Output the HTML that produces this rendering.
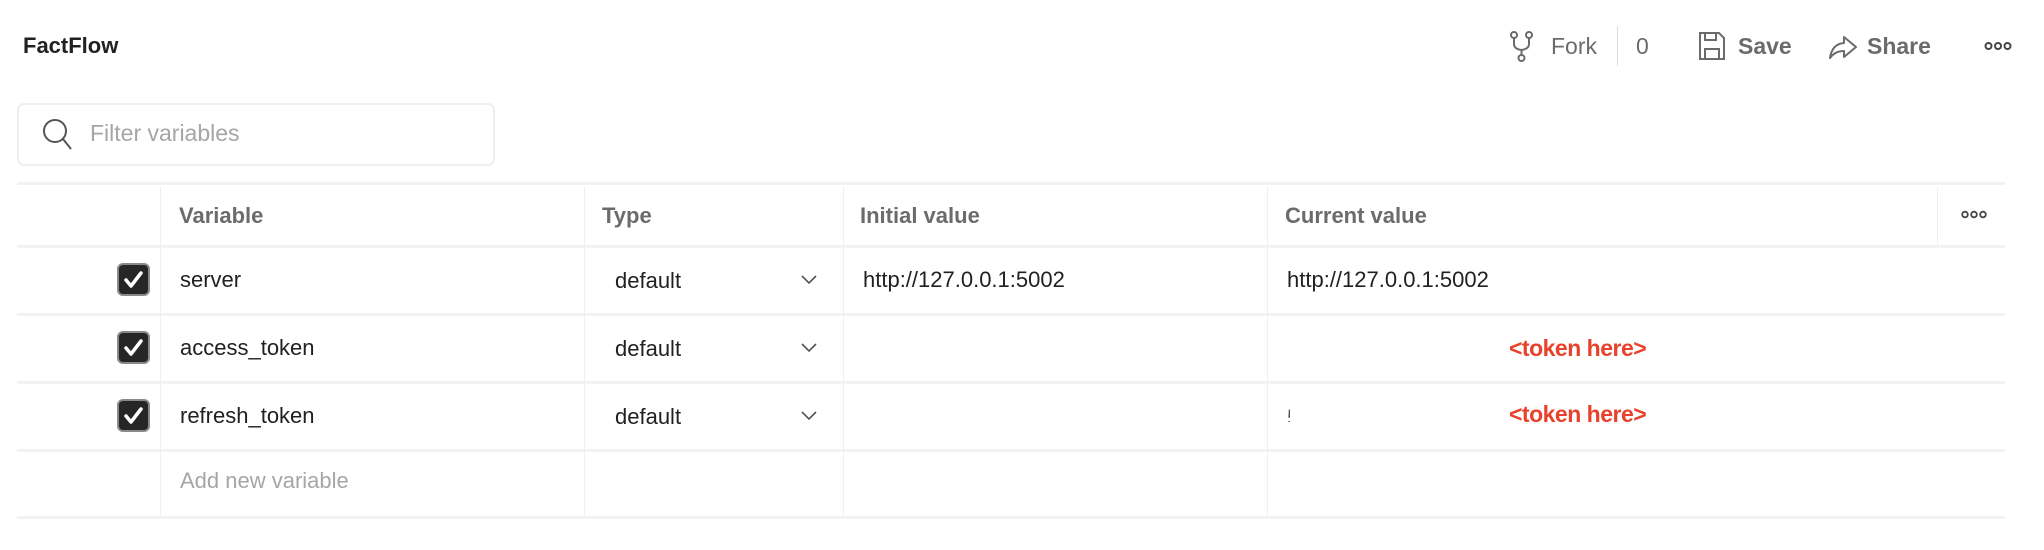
<!DOCTYPE html>
<html><head><meta charset="utf-8"><style>
*{margin:0;padding:0;box-sizing:border-box}
body{width:2044px;height:550px;background:#fff;font-family:"Liberation Sans",sans-serif;position:relative;overflow:hidden;color:#212121}
.a{position:absolute;white-space:nowrap}
.hl{position:absolute;left:17px;width:1988px;height:3px;background:#f2f2f2}
.vl{position:absolute;top:187px;height:330px;width:1px;background:#f0f0f0}
.th{position:absolute;top:203px;font-size:22px;font-weight:bold;color:#6b6b6b}
.td{font-size:22px;color:#212121}
.cb{position:absolute;left:117px;width:33px;height:33px;background:#262626;border:2px solid #8a8a8a;border-radius:6px}
.tok{position:absolute;left:1509px;font-size:23px;font-weight:bold;color:#e8412c;letter-spacing:-0.5px}
.top{position:absolute;top:33px;font-size:23px;color:#6b6b6b}
</style></head><body>
<div class="a" style="left:23px;top:33px;font-size:22px;font-weight:bold">FactFlow</div>

<svg class="a" style="left:1508px;top:30px" width="28" height="32" viewBox="0 0 28 32" fill="none" stroke="#6b6b6b" stroke-width="2"><circle cx="6" cy="5" r="3"/><circle cx="21" cy="5" r="3"/><circle cx="13.5" cy="28" r="3"/><path d="M6 8v6q0 5 7.5 6q7.5-1 7.5-6V8M13.5 20v5"/></svg>
<div class="top" style="left:1551px">Fork</div>
<div class="a" style="left:1617px;top:26px;width:1px;height:40px;background:#dcdcdc"></div>
<div class="top" style="left:1636px">0</div>
<svg class="a" style="left:1698px;top:31px" width="28" height="30" viewBox="0 0 28 30" fill="none" stroke="#6b6b6b" stroke-width="2"><path d="M2 2h19l5 5v21H2z"/><path d="M7 2v7h11V2M7 28v-10h14v10"/></svg>
<div class="top" style="left:1738px;font-weight:bold">Save</div>
<svg class="a" style="left:1828px;top:32px" width="30" height="28" viewBox="0 0 30 28" fill="none" stroke="#6b6b6b" stroke-width="2" stroke-linejoin="round"><path d="M2 26q2-14 14-15V5l12 10-12 10v-6q-9 0-14 7z"/></svg>
<div class="top" style="left:1867px;font-weight:bold">Share</div>
<svg class="a" style="left:1984px;top:40px" width="28" height="12" viewBox="0 0 28 12" fill="none" stroke="#444" stroke-width="2"><circle cx="4.5" cy="6" r="3"/><circle cx="14" cy="6" r="3"/><circle cx="23.5" cy="6" r="3"/></svg>

<div class="a" style="left:17px;top:103px;width:478px;height:63px;border:2px solid #efefef;border-radius:7px"></div>
<svg class="a" style="left:42px;top:118px" width="32" height="34" viewBox="0 0 32 34" fill="none" stroke="#555" stroke-width="2"><circle cx="13" cy="13" r="11"/><path d="M21 21l8 10"/></svg>
<div class="a" style="left:90px;top:120px;font-size:23px;color:#a6a6a6">Filter variables</div>

<div class="hl" style="top:182px"></div>
<div class="hl" style="top:245px"></div>
<div class="hl" style="top:313px"></div>
<div class="hl" style="top:381px"></div>
<div class="hl" style="top:449px"></div>
<div class="hl" style="top:516px"></div>
<div class="vl" style="left:160px"></div>
<div class="vl" style="left:584px"></div>
<div class="vl" style="left:843px"></div>
<div class="vl" style="left:1267px"></div>
<div class="vl" style="left:1937px;height:60px"></div>

<div class="th" style="left:179px">Variable</div>
<div class="th" style="left:602px">Type</div>
<div class="th" style="left:860px">Initial value</div>
<div class="th" style="left:1285px">Current value</div>
<svg class="a" style="left:1961px;top:209px" width="26" height="11" viewBox="0 0 26 11" fill="none" stroke="#444" stroke-width="1.8"><circle cx="4" cy="5.5" r="2.8"/><circle cx="13" cy="5.5" r="2.8"/><circle cx="22" cy="5.5" r="2.8"/></svg>

<div class="cb" style="top:263px"></div>
<div class="cb" style="top:331px"></div>
<div class="cb" style="top:399px"></div>
<svg class="a" style="left:117px;top:263px" width="33" height="170" viewBox="0 0 33 170" fill="none" stroke="#fff" stroke-width="3.5" stroke-linecap="round" stroke-linejoin="round"><path d="M9 17l5 6 10-13"/><path d="M9 85l5 6 10-13"/><path d="M9 153l5 6 10-13"/></svg>

<div class="a td" style="left:180px;top:267px">server</div>
<div class="a td" style="left:180px;top:335px">access_token</div>
<div class="a td" style="left:180px;top:403px">refresh_token</div>
<div class="a td" style="left:180px;top:468px;color:#a6a6a6">Add new variable</div>

<div class="a td" style="left:615px;top:268px">default</div>
<div class="a td" style="left:615px;top:336px">default</div>
<div class="a td" style="left:615px;top:404px">default</div>
<svg class="a" style="left:800px;top:273px" width="18" height="150" viewBox="0 0 18 150" fill="none" stroke="#555" stroke-width="1.6"><path d="M2 3l7 7 7-7"/><path d="M2 71l7 7 7-7"/><path d="M2 139l7 7 7-7"/></svg>

<div class="a td" style="left:863px;top:267px">http://127.0.0.1:5002</div>
<div class="a td" style="left:1287px;top:267px">http://127.0.0.1:5002</div>
<div class="tok" style="top:335px">&lt;token here&gt;</div>
<div class="tok" style="top:401px">&lt;token here&gt;</div>
<div class="a" style="left:1287px;top:405px;width:3px;height:17px;overflow:hidden;font-size:22px;color:#555">5</div>
</body></html>
